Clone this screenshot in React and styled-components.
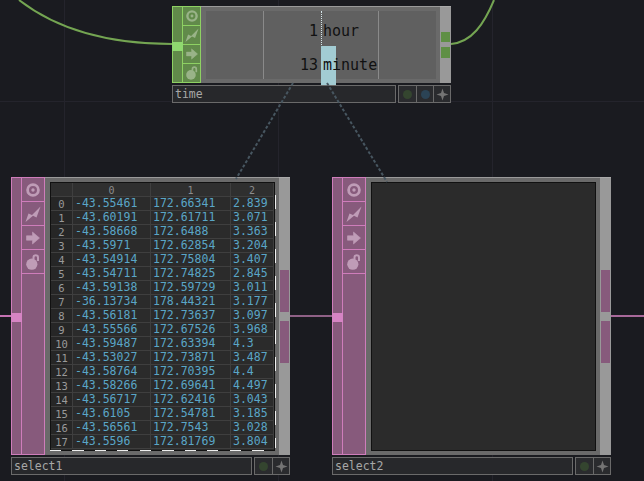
import React from 'react';
import styled, { createGlobalStyle } from 'styled-components';

const palette = {
    pink: { line: '#cf7dbb', fill: '#875a7c', icon: '#bf9cb7', port: '#d684c4', wire: '#c573b3', dim: '#8a5c7f' },
    green: { line: '#8ed163', fill: '#618a4a', icon: '#99b388', port: '#8fd96f', wire: '#74a552', dim: '#5f8f45' },
};

const rows = [
    ['-43.55461', '172.66341', '2.839'],
    ['-43.60191', '172.61711', '3.071'],
    ['-43.58668', '172.6488', '3.363'],
    ['-43.5971', '172.62854', '3.204'],
    ['-43.54914', '172.75804', '3.407'],
    ['-43.54711', '172.74825', '2.845'],
    ['-43.59138', '172.59729', '3.011'],
    ['-36.13734', '178.44321', '3.177'],
    ['-43.56181', '172.73637', '3.097'],
    ['-43.55566', '172.67526', '3.968'],
    ['-43.59487', '172.63394', '4.3'],
    ['-43.53027', '172.73871', '3.487'],
    ['-43.58764', '172.70395', '4.4'],
    ['-43.58266', '172.69641', '4.497'],
    ['-43.56717', '172.62416', '3.043'],
    ['-43.6105', '172.54781', '3.185'],
    ['-43.56561', '172.7543', '3.028'],
    ['-43.5596', '172.81769', '3.804'],
];

const GlobalStyle = createGlobalStyle`
    html, body {
        margin: 0;
        padding: 0;
        background: #1a1b20;
    }
`;

const Canvas = styled.div`
    position: relative;
    width: 644px;
    height: 481px;
    overflow: hidden;
    font-family: "DejaVu Sans Mono", monospace;
    background-color: #1a1b20;
    background-image:
        linear-gradient(#24242c, #24242c),
        linear-gradient(#24242c, #24242c),
        linear-gradient(#24242c, #24242c),
        linear-gradient(#24242c, #24242c);
    background-size: 1px 100%, 1px 100%, 1px 100%, 100% 1px;
    background-position: 64px 0, 278px 0, 492px 0, 0 101px;
    background-repeat: no-repeat;
`;

const Wires = styled.svg`
    position: absolute;
    left: 0;
    top: 0;
`;

const Node = styled.div`
    position: absolute;
    left: ${p => p.$x}px;
    top: ${p => p.$y}px;
    width: 279px;
    display: flex;
    flex-direction: column;
    gap: 2px;
`;

const Frame = styled.div`
    display: flex;
    height: ${p => p.$h}px;
`;

const InStrip = styled.div`
    position: relative;
    width: 9px;
    border: 1px solid ${p => p.$c.line};
    border-right: 0;
    background: ${p => p.$c.fill};
`;

const InPort = styled.div`
    position: absolute;
    left: -1px;
    top: ${p => p.$y}px;
    width: 11px;
    height: 9px;
    background: ${p => p.$c.port};
`;

const IconColumn = styled.div`
    width: ${p => p.$w}px;
    display: flex;
    flex-direction: column;
    border: 1px solid ${p => p.$c.line};
    background: ${p => p.$c.fill};
    box-sizing: border-box;
`;

const IconCell = styled.div`
    height: ${p => p.$h}px;
    flex: none;
    display: flex;
    align-items: center;
    justify-content: center;
    border-bottom: 1px solid ${p => p.$c.line};
    color: ${p => p.$c.icon};
    box-sizing: border-box;
`;

const Body = styled.div`
    flex: 1;
    display: flex;
    box-sizing: border-box;
    padding: 4px 4px 4px 5px;
    background: #6a6a6a;
    border-top: 1px solid #9a9a9a;
`;

const OutStrip = styled.div`
    width: 11px;
    box-sizing: border-box;
    padding: ${p => p.$top}px 1px 0;
    display: flex;
    flex-direction: column;
    gap: ${p => p.$gap}px;
    background: #999;
    border-top: 1px solid #aaa;
`;

const OutPort = styled.div`
    height: ${p => p.$h}px;
    background: ${p => p.$c.dim};
`;

const TimeView = styled.div`
    position: relative;
    flex: 1;
    color: #111;
    font-size: 15px;
    background-color: #606060;
    background-image:
        linear-gradient(#8a8a8a, #8a8a8a),
        linear-gradient(#8a8a8a, #8a8a8a);
    background-size: 1px 100%;
    background-position: 57px 0, 172px 0;
    background-repeat: no-repeat;
`;

const TimeRow = styled.div`
    height: 34px;
    display: grid;
    grid-template-columns: 115px 1fr;
    line-height: 40px;
`;

const TimeValue = styled.span`
    text-align: right;
    padding-right: 3px;
`;

const TimeLabel = styled.span`
    position: relative;
    padding-left: ${p => (p.$dotted ? '1px' : '2px')};
    border-left: ${p => (p.$dotted ? '1px dotted #d5e6ea' : '0')};
`;

const TimeBar = styled.i`
    position: absolute;
    left: 0;
    top: 1px;
    bottom: 0;
    background: #a2ccd3;
`;

const LabelText = styled.span`
    position: relative;
`;

const Viewer = styled.div`
    position: relative;
    flex: 1;
    box-sizing: border-box;
    border: 1px solid #111;
    background: #2b2b2b;
`;

const Table = styled.div`
    display: grid;
    grid-template-columns: 22px 78px 80px 1fr;
    grid-auto-rows: 14px;
    font-size: 11.5px;
    line-height: 13px;
`;

const HeaderCell = styled.div`
    height: 14px;
    box-sizing: border-box;
    margin-bottom: 1px;
    text-align: center;
    font-size: 10px;
    line-height: 15px;
    color: #8c8c8c;
    background: #2f2f2f;
    border-right: 1px solid #3f3f3f;
    border-bottom: 1px solid #3f3f3f;
`;

const IndexCell = styled.div`
    text-align: center;
    font-size: 10.5px;
    line-height: 15px;
    color: #9a9a9a;
    background: #262626;
    box-sizing: border-box;
    border-right: 1px solid #3f3f3f;
    border-bottom: 1px solid #3f3f3f;
`;

const DataCell = styled.div`
    padding-left: 2px;
    color: #5aa6c7;
    box-sizing: border-box;
    border-right: 1px solid #3f3f3f;
    border-bottom: 1px solid #3f3f3f;
`;

const DashRight = styled.div`
    position: absolute;
    right: -2px;
    top: 12px;
    bottom: 2px;
    width: 1px;
    background: repeating-linear-gradient(#eee 0 14px, transparent 14px 27px);
`;

const DashBottom = styled.div`
    position: absolute;
    left: -1px;
    right: 0;
    bottom: -1px;
    height: 1px;
    background: repeating-linear-gradient(90deg, #eee 0 11px, transparent 11px 22.5px);
`;

const NameRow = styled.div`
    display: flex;
    height: 18px;
    gap: 2px;
`;

const NameField = styled.div`
    flex: 1;
    box-sizing: border-box;
    border: 1px solid #6a6a6a;
    background: #27282b;
    color: #a8a8a8;
    font-size: 11.5px;
    line-height: 16px;
    padding-left: 2px;
`;

const ButtonGroup = styled.div`
    display: flex;
    border: 1px solid #6a6a6a;
`;

const FlagButton = styled.div`
    width: 17px;
    box-sizing: border-box;
    display: flex;
    align-items: center;
    justify-content: center;
    background: #2a2b2e;
    & + & {
        border-left: 1px solid #6a6a6a;
    }
`;

const Dot = styled.span`
    width: 9px;
    height: 9px;
    border-radius: 50%;
    background: ${p => p.$color};
`;

const TargetIcon = ({ size }) => (
    <svg width={size} height={size} viewBox="0 0 14 14">
        <circle cx="7" cy="7" r="5.4" fill="none" stroke="currentColor" strokeWidth="2.8" />
        <circle cx="7" cy="7" r="1.7" fill="currentColor" />
    </svg>
);

const BoltIcon = ({ size }) => (
    <svg width={size + 2} height={size + 2} viewBox="0 0 16 16">
        <path d="M0.5 16 L3.5 7.5 L7 9 L15.5 0.5 L11.5 11.5 L8 9.8 Z" fill="currentColor" />
    </svg>
);

const ArrowIcon = ({ size }) => (
    <svg width={size} height={size} viewBox="0 0 14 14">
        <path d="M0.5 4.8 H6.5 V1 L13.5 7 L6.5 13 V9.2 H0.5 Z" fill="currentColor" stroke="currentColor" strokeLinejoin="round" strokeWidth="0.6" />
    </svg>
);

const LockIcon = ({ size }) => (
    <svg width={size} height={size + 2} viewBox="0 0 14 16">
        <circle cx="5.8" cy="10.2" r="5.6" fill="currentColor" />
        <path d="M7.5 5.5 V3.5 A2.2 2.2 0 0 1 12 3.5 V7" fill="none" stroke="currentColor" strokeWidth="2" />
    </svg>
);

const PlusIcon = () => (
    <svg width="13" height="13" viewBox="0 0 13 13">
        <path d="M6.5 0.5 L8 5 L12.5 6.5 L8 8 L6.5 12.5 L5 8 L0.5 6.5 L5 5 Z" fill="#747474" />
    </svg>
);

const iconList = [TargetIcon, BoltIcon, ArrowIcon, LockIcon];

const Icons = ({ color, width, cell, size }) => (
    <IconColumn $c={color} $w={width}>
        {iconList.map((Icon, i) => (
            <IconCell key={i} $c={color} $h={cell}>
                <Icon size={size} />
            </IconCell>
        ))}
    </IconColumn>
);

const NameBar = ({ name, dots }) => (
    <NameRow>
        <NameField>{name}</NameField>
        <ButtonGroup>
            {dots.map(d => (
                <FlagButton key={d}>
                    <Dot $color={d} />
                </FlagButton>
            ))}
            <FlagButton>
                <PlusIcon />
            </FlagButton>
        </ButtonGroup>
    </NameRow>
);

const DataTable = () => (
    <Table>
        <HeaderCell />
        <HeaderCell>0</HeaderCell>
        <HeaderCell>1</HeaderCell>
        <HeaderCell>2</HeaderCell>
        {rows.map((r, i) => (
            <React.Fragment key={i}>
                <IndexCell>{i}</IndexCell>
                {r.map((v, j) => (
                    <DataCell key={j}>{v}</DataCell>
                ))}
            </React.Fragment>
        ))}
    </Table>
);

const SelectNode = ({ x, name, children }) => (
    <Node $x={x} $y={177}>
        <Frame $h={278}>
            <InStrip $c={palette.pink}>
                <InPort $c={palette.pink} $y={135} />
            </InStrip>
            <Icons color={palette.pink} width={24} cell={24} size={14} />
            <Body>
                <Viewer>{children}</Viewer>
            </Body>
            <OutStrip $top={92} $gap={9}>
                <OutPort $c={{ dim: palette.pink.fill }} $h={42} />
                <OutPort $c={{ dim: palette.pink.fill }} $h={42} />
            </OutStrip>
        </Frame>
        <NameBar name={name} dots={['#34452f']} />
    </Node>
);

const App = () => (
    <Canvas>
        <GlobalStyle />
        <Wires width="644" height="481" viewBox="0 0 644 481">
            <path d="M19 0 C 55 28, 105 44, 172 44" fill="none" stroke={palette.green.wire} strokeWidth="2" />
            <path d="M451 44 C 472 42, 484 24, 494 0" fill="none" stroke={palette.green.wire} strokeWidth="2" />
            <path d="M0 316 H11" stroke={palette.pink.wire} strokeWidth="2" />
            <path d="M290 316 H332" stroke="#8f6186" strokeWidth="2" />
            <path d="M611 316 H644" stroke="#a8699a" strokeWidth="2" />
        </Wires>

        <Node $x={172} $y={6}>
            <Frame $h={77}>
                <InStrip $c={palette.green}>
                    <InPort $c={palette.green} $y={35} />
                </InStrip>
                <Icons color={palette.green} width={19} cell={19} size={12} />
                <Body>
                    <TimeView>
                        <TimeRow>
                            <TimeValue>1</TimeValue>
                            <TimeLabel $dotted>hour</TimeLabel>
                        </TimeRow>
                        <TimeRow>
                            <TimeValue>13</TimeValue>
                            <TimeLabel>
                                <TimeBar style={{ width: 15 }} />
                                <LabelText>minute</LabelText>
                            </TimeLabel>
                        </TimeRow>
                    </TimeView>
                </Body>
                <OutStrip $top={25} $gap={5}>
                    <OutPort $c={palette.green} $h={10} />
                    <OutPort $c={palette.green} $h={11} />
                </OutStrip>
            </Frame>
            <NameBar name="time" dots={['#34452f', '#2b4355']} />
        </Node>

        <SelectNode x={11} name="select1">
            <DataTable />
            <DashRight />
            <DashBottom />
        </SelectNode>

        <SelectNode x={332} name="select2" />

        <Wires width="644" height="481" viewBox="0 0 644 481">
            <path d="M293 83 L236 179" stroke="#475660" strokeWidth="2" strokeDasharray="3 2" />
            <path d="M327 83 L387 182" stroke="#475660" strokeWidth="2" strokeDasharray="3 2" />
        </Wires>
    </Canvas>
);

export default App;
